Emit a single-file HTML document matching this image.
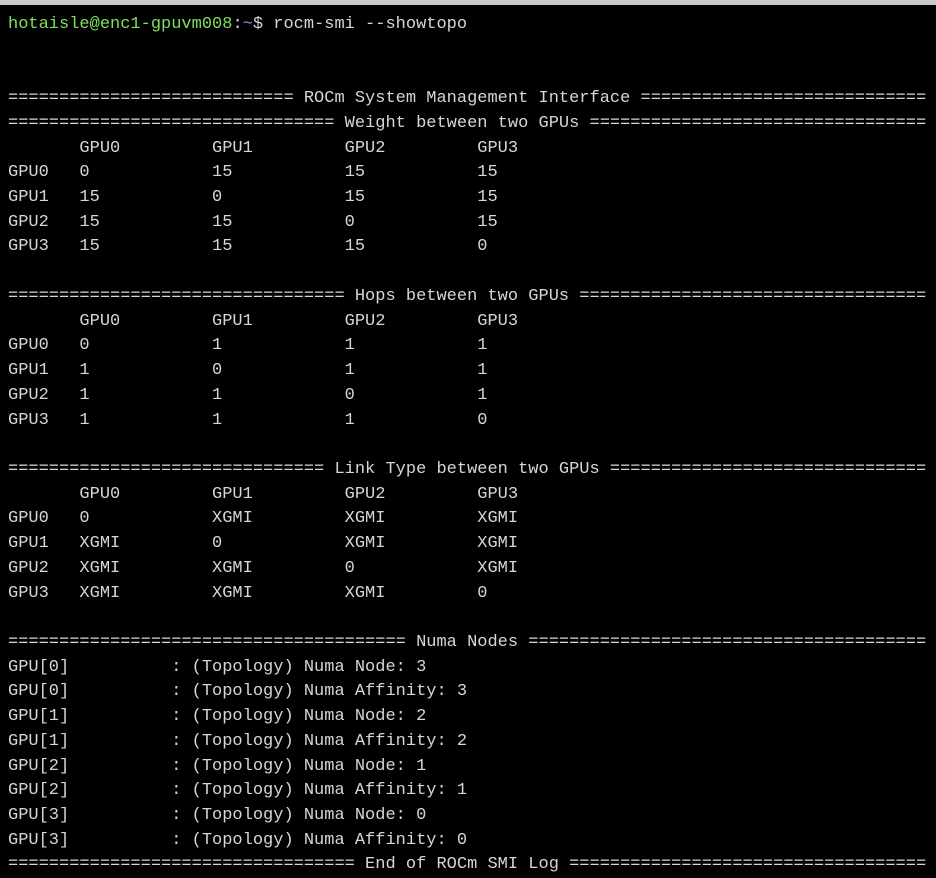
<!DOCTYPE html>
<html><head><meta charset="utf-8"><style>
html,body{margin:0;padding:0;background:#000;width:936px;height:866px;overflow:hidden}
.bar{position:absolute;left:0;top:0;width:936px;height:5px;background:#c8c8c8}
pre{position:absolute;left:8px;top:13px;margin:0;font-family:"Liberation Mono",monospace;font-size:17px;letter-spacing:0;line-height:24.72px;color:#d6d6d6;white-space:pre}
.g{color:#7ee05e}.b{color:#8f8fe8}
</style></head><body>
<div class="bar"></div>
<pre><span class="g">hotaisle@enc1-gpuvm008</span>:<span class="b">~</span>$ rocm-smi --showtopo


============================ ROCm System Management Interface ============================
================================ Weight between two GPUs =================================
       GPU0         GPU1         GPU2         GPU3
GPU0   0            15           15           15
GPU1   15           0            15           15
GPU2   15           15           0            15
GPU3   15           15           15           0

================================= Hops between two GPUs ==================================
       GPU0         GPU1         GPU2         GPU3
GPU0   0            1            1            1
GPU1   1            0            1            1
GPU2   1            1            0            1
GPU3   1            1            1            0

=============================== Link Type between two GPUs ===============================
       GPU0         GPU1         GPU2         GPU3
GPU0   0            XGMI         XGMI         XGMI
GPU1   XGMI         0            XGMI         XGMI
GPU2   XGMI         XGMI         0            XGMI
GPU3   XGMI         XGMI         XGMI         0

======================================= Numa Nodes =======================================
GPU[0]          : (Topology) Numa Node: 3
GPU[0]          : (Topology) Numa Affinity: 3
GPU[1]          : (Topology) Numa Node: 2
GPU[1]          : (Topology) Numa Affinity: 2
GPU[2]          : (Topology) Numa Node: 1
GPU[2]          : (Topology) Numa Affinity: 1
GPU[3]          : (Topology) Numa Node: 0
GPU[3]          : (Topology) Numa Affinity: 0
================================== End of ROCm SMI Log ===================================</pre>
</body></html>
